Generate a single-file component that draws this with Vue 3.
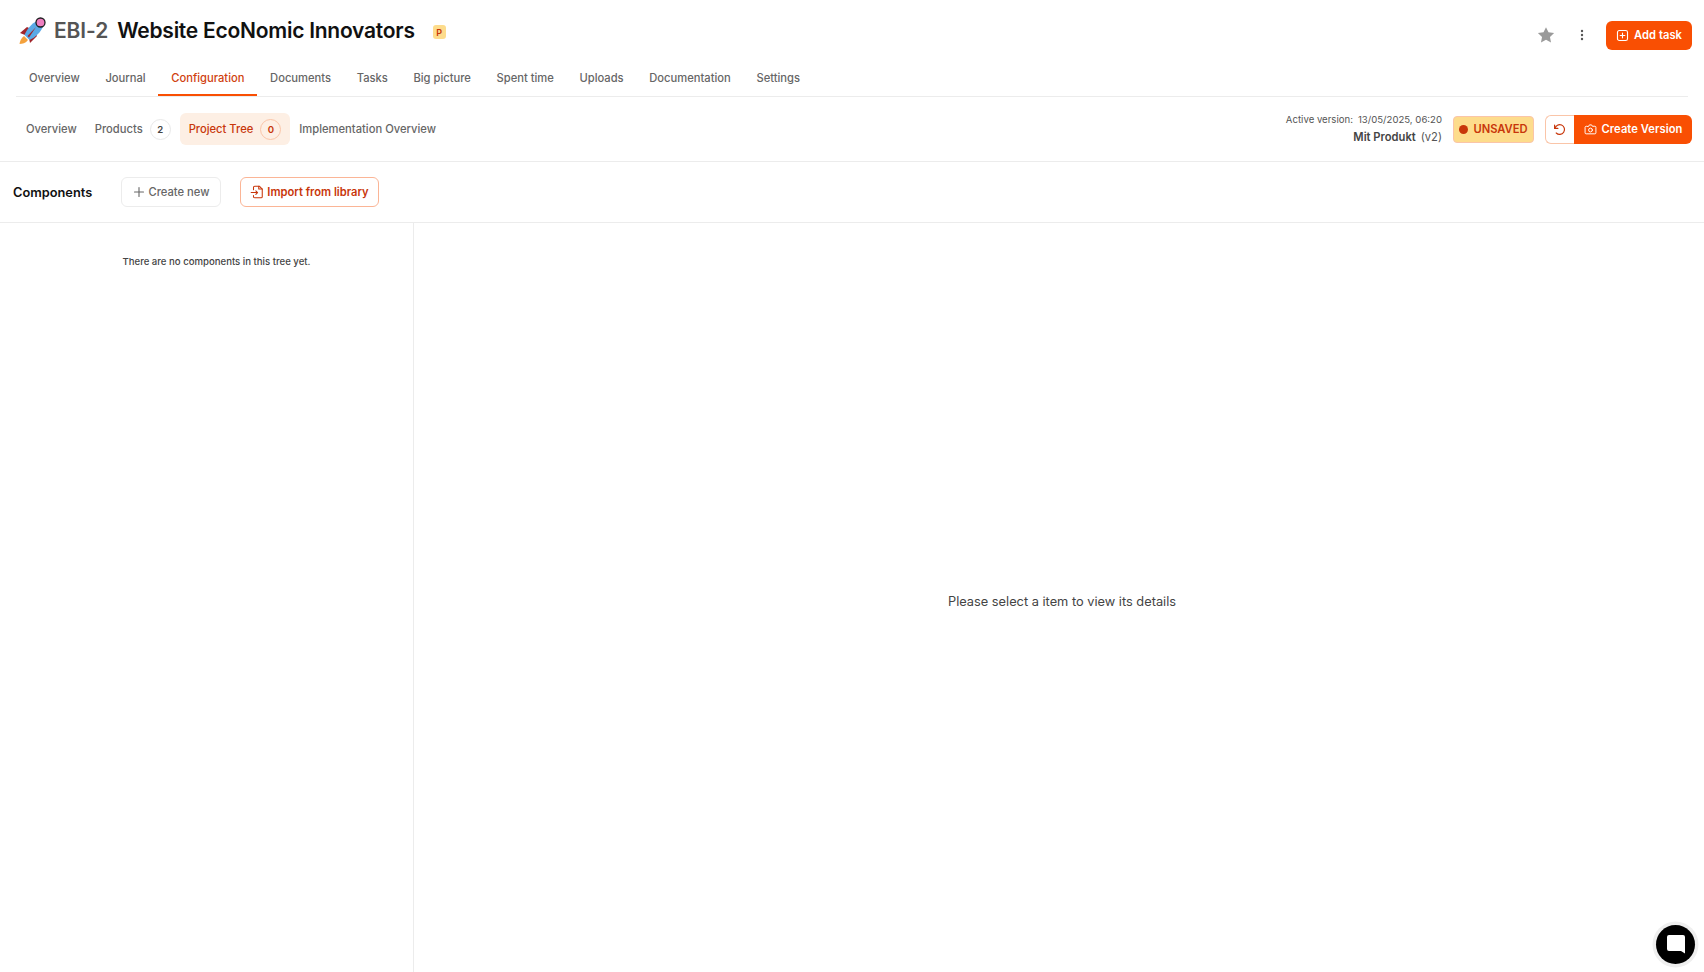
<script setup>
const mainTabs = ['Overview', 'Journal', 'Configuration', 'Documents', 'Tasks', 'Big picture', 'Spent time', 'Uploads', 'Documentation', 'Settings']
const subTabs = [
  { label: 'Overview' },
  { label: 'Products', count: 2 },
  { label: 'Project Tree', count: 0, active: true },
  { label: 'Implementation Overview' }
]
</script>

<template>
  <div class="page">
    <header class="head">
      <div class="title-row">
        <svg class="rocket" width="28" height="28" viewBox="0 0 28 28">
          <path d="M2 17 L9 11 L13 13 L7 19 Z" fill="#a0252b"/>
          <path d="M12 27 L19 20 L17 16 L11 22 Z" fill="#a0252b"/>
          <path d="M6 20 C3 22 2 25 1.500 28 C4 28 8 27 10 24 Z" fill="#f4a13c"/>
          <path d="M19 5 C13 8 9 13 6.500 19 L11.500 24 C18 21 23 16 25.500 9.500 Z" fill="#5aa9e6"/>
          <path d="M18 11 L9.500 20 L11 21.500 Z" fill="#a0252b"/>
          <circle cx="22.500" cy="6.500" r="4.500" fill="#ee7fc0" stroke="#1d1d1f" stroke-width="1.300"/>
        </svg>
        <span class="code">EBI-2</span>
        <h1 class="name">Website EcoNomic Innovators</h1>
        <span class="prio">P</span>
        <div class="head-actions">
          <svg class="star" width="18" height="18" viewBox="0 0 24 24"><path fill="#9a9a9a" d="M12 1.500l3.300 6.900 7.500 1-5.500 5.200 1.400 7.500L12 18.400l-6.700 3.700 1.400-7.500L1.200 9.400l7.500-1z"/></svg>
          <svg class="dots" width="4" height="12" viewBox="0 0 4 12"><circle cx="2" cy="2" r="1.200" fill="#555"/><circle cx="2" cy="6" r="1.200" fill="#555"/><circle cx="2" cy="10" r="1.200" fill="#555"/></svg>
          <button class="add-task">
            <svg width="13" height="13" viewBox="0 0 14 14" fill="none" stroke="#fff" stroke-width="1.200" stroke-linecap="round"><rect x="1.600" y="1.600" width="10.800" height="10.800" rx="2"/><path d="M7 4.500v5M4.500 7h5"/></svg>
            Add task
          </button>
        </div>
      </div>
      <nav class="main-tabs">
        <a v-for="t in mainTabs" :key="t" class="main-tab" :class="{ on: t === 'Configuration' }">{{ t }}</a>
      </nav>
    </header>

    <section class="sub-bar">
      <nav class="sub-tabs">
        <a v-for="t in subTabs" :key="t.label" class="sub-tab" :class="{ on: t.active }">
          {{ t.label }}
          <span v-if="t.count !== undefined" class="count">{{ t.count }}</span>
        </a>
      </nav>
      <div class="version">
        <div class="version-info">
          <div class="version-date"><span>Active version:</span><span>13/05/2025, 06:20</span></div>
          <div class="version-name"><b>Mit Produkt</b><span>(v2)</span></div>
        </div>
        <div class="unsaved"><i class="dot"></i>UNSAVED</div>
        <div class="btn-group">
          <button class="reset">
            <svg width="13" height="13" viewBox="0 0 24 24" fill="none" stroke="#c8360a" stroke-width="2.200" stroke-linecap="round" stroke-linejoin="round"><path d="M3 4v6h6"/><path d="M3.500 10A9 9 0 1 1 6 18.500"/></svg>
          </button>
          <button class="create">
            <svg width="13" height="13" viewBox="0 0 24 24" fill="none" stroke="#fff" stroke-width="1.800" stroke-linecap="round" stroke-linejoin="round"><path d="M8.500 6l1.500-2.500h4L15.500 6H20a2 2 0 0 1 2 2v10a2 2 0 0 1-2 2H4a2 2 0 0 1-2-2V8a2 2 0 0 1 2-2z"/><circle cx="12" cy="13" r="3.500"/></svg>
            Create Version
          </button>
        </div>
      </div>
    </section>

    <section class="comp-bar">
      <h2 class="comp-title">Components</h2>
      <button class="btn plain">
        <svg width="12" height="12" viewBox="0 0 12 12" stroke="#666" stroke-width="1.100" stroke-linecap="round"><path d="M6 1.500v9M1.500 6h9"/></svg>
        Create new
      </button>
      <button class="btn outline">
        <svg width="14" height="14" viewBox="0 0 24 24" fill="none" stroke="#c8360a" stroke-width="1.800" stroke-linecap="round" stroke-linejoin="round"><path d="M6 8V4a2 2 0 0 1 2-2h8l5 5v13a2 2 0 0 1-2 2H8a2 2 0 0 1-2-2v-2"/><path d="M15 2v5h6"/><path d="M2 13h11M10 10l3 3-3 3"/></svg>
        Import from library
      </button>
    </section>

    <main class="body">
      <aside class="tree"><p>There are no components in this tree yet.</p></aside>
      <div class="detail">Please select a item to view its details</div>
    </main>

    <button class="chat" aria-label="Chat">
      <svg width="20" height="21" viewBox="0 0 20 21"><path fill="#fff" d="M3 1h14a2 2 0 0 1 2 2v16.500l-4-2.500H3a2 2 0 0 1-2-2V3a2 2 0 0 1 2-2z"/></svg>
    </button>
  </div>
</template>

<style>
html, body { margin: 0; background: #fff; }
</style>

<style scoped>
.page {
  position: relative;
  height: 972px;
  display: flex;
  flex-direction: column;
  overflow: hidden;
  font-family: Inter, "Noto Sans", sans-serif;
  color: #111;
  background: #fff;
}
button { font-family: inherit; cursor: pointer; }
.head { padding: 0 16px; }
.title-row {
  height: 60px;
  display: flex;
  align-items: center;
  padding-left: 2px;
}
.rocket { margin-right: 8px; flex: none; }
.code { font-size: 21px; font-weight: 600; color: #555; letter-spacing: -0.100px; margin-right: 9px; }
.name { margin: 0; font-size: 21px; font-weight: 600; color: #111; letter-spacing: -0.250px; }
.prio {
  margin: 4px 0 0 18px;
  width: 13px;
  height: 14px;
  border-radius: 3px;
  background: #fddc8c;
  color: #c8360a;
  font-size: 9px;
  font-weight: 600;
  display: flex;
  align-items: center;
  justify-content: center;
}
.head-actions { margin-left: auto; margin-right: -4px; display: flex; align-items: center; padding-top: 10px; }
.star { margin-right: 25px; }
.dots { margin-right: 22px; }
.add-task {
  width: 86px;
  height: 29px;
  border: 0;
  border-radius: 6px;
  background: #f94f03;
  color: #fff;
  font-size: 11.200px;
  font-weight: 600;
  letter-spacing: 0.050px;
  display: flex;
  align-items: center;
  justify-content: center;
  gap: 5px;
  padding: 0;
}
.main-tabs { display: flex; border-bottom: 1px solid #ececec; height: 36px; box-sizing: content-box; }
.main-tab {
  padding: 0 12.800px;
  font-size: 11.200px;
  font-weight: 500;
  color: #666;
  line-height: 36px;
  height: 36px;
  box-sizing: border-box;
}
.main-tab:first-child { padding-left: 13px; }
.main-tab.on { color: #d0410f; border-bottom: 2px solid #f94f03; }
.sub-bar {
  height: 65px;
  flex: none;
  box-sizing: border-box;
  border-bottom: 1px solid #ececec;
  display: flex;
  align-items: center;
  justify-content: space-between;
  padding: 0 12px 0 17px;
}
.sub-tabs { display: flex; }
.sub-tab {
  display: flex;
  align-items: center;
  gap: 7px;
  height: 32px;
  padding: 0 9px;
  border-radius: 6px;
  font-size: 11.200px;
  font-weight: 500;
  color: #666;
}
.sub-tab.on { background: #fdefe4; color: #c8360a; }
.count {
  width: 19px;
  height: 19px;
  border-radius: 50%;
  border: 1px solid #e8e8e8;
  background: #fff;
  font-size: 9.600px;
  font-weight: 600;
  color: #444;
  display: flex;
  align-items: center;
  justify-content: center;
}
.sub-tab.on .count { border-color: #fac5a8; background: transparent; color: #c8360a; }
.version { display: flex; align-items: center; }
.version-info { text-align: right; margin-right: 11px; }
.version-date { font-size: 9.600px; color: #555; display: flex; gap: 5px; justify-content: flex-end; line-height: 16px; }
.version-name { font-size: 11.200px; color: #555; display: flex; gap: 5px; justify-content: flex-end; line-height: 18px; }
.version-name b { font-weight: 600; color: #444; }
.unsaved {
  width: 81px;
  height: 27px;
  box-sizing: border-box;
  border: 1.500px solid #fac5a8;
  border-radius: 4px;
  background: #fddc8c;
  color: #c8360a;
  font-size: 11.200px;
  font-weight: 600;
  display: flex;
  align-items: center;
  justify-content: center;
  gap: 5px;
  margin-right: 11px;
}
.dot { width: 9px; height: 9px; border-radius: 50%; background: #c8360a; }
.btn-group { display: flex; height: 29px; }
.reset {
  width: 29px;
  border: 1px solid #fac5a8;
  border-right: 0;
  border-radius: 6px 0 0 6px;
  background: #fff;
  padding: 0 1px 0 0;
  display: flex;
  align-items: center;
  justify-content: center;
}
.create {
  width: 118px;
  border: 0;
  border-radius: 0 6px 6px 0;
  background: #f94f03;
  color: #fff;
  font-size: 11.200px;
  font-weight: 600;
  letter-spacing: 0.050px;
  display: flex;
  align-items: center;
  justify-content: center;
  gap: 5px;
  padding: 0;
}
.comp-bar {
  height: 61px;
  flex: none;
  box-sizing: border-box;
  border-bottom: 1px solid #ececec;
  display: flex;
  align-items: center;
  padding-left: 13px;
}
.comp-title { margin: 0 29px 0 0; width: 79px; font-size: 12.800px; font-weight: 600; color: #111; white-space: nowrap; }
.btn {
  height: 30px;
  box-sizing: border-box;
  border-radius: 6px;
  background: #fff;
  font-size: 11.200px;
  font-weight: 500;
  display: flex;
  align-items: center;
  justify-content: center;
  gap: 4px;
  padding: 0;
}
.plain { width: 100px; border: 1px solid #ececec; color: #666; margin-right: 19px; }
.outline { width: 139px; border: 1px solid #fbb596; color: #c8360a; font-weight: 600; gap: 3px; }
.body { flex: 1; display: flex; min-height: 0; }
.tree { width: 413px; flex: none; border-right: 1px solid #ececec; box-sizing: content-box; }
.tree p { margin: 28px 0 0; text-align: center; font-size: 9.600px; font-weight: 500; color: #444; line-height: 22px; transform: translateX(10px); }
.detail { flex: 1; display: flex; align-items: center; justify-content: center; font-size: 12.800px; color: #444; padding: 7px 0 0 6px; box-sizing: border-box; }
.chat {
  position: absolute;
  right: 9px;
  bottom: 8px;
  width: 39px;
  height: 39px;
  border-radius: 50%;
  background: #000;
  border: 0;
  box-shadow: 0 0 0 3.500px #efefef;
  display: flex;
  align-items: center;
  justify-content: center;
  padding: 0;
}
</style>
